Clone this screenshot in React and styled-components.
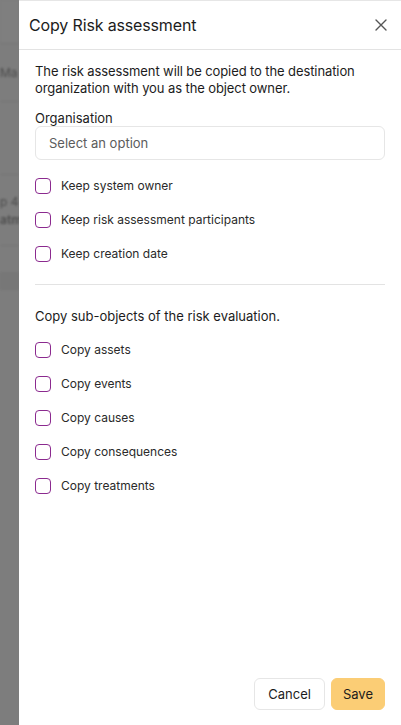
import React from "react";
import styled, { createGlobalStyle } from "styled-components";

const Global = createGlobalStyle`
  html, body { margin: 0; padding: 0; height: 100%; }
  body { font-family: "Inter", "Liberation Sans", sans-serif; color: #1f1f1f; background: #7f7f7f; }
  #root { height: 100%; }
  * { box-sizing: border-box; }
`;

const Screen = styled.div`
  display: flex;
  width: 401px;
  height: 725px;
  overflow: hidden;
`;

const Backdrop = styled.div`
  width: 19px;
  flex: none;
  display: flex;
  flex-direction: column;
  background: #7d7d7d;
  overflow: hidden;
`;

const BackRow = styled.div`
  height: ${(p) => p.h}px;
  flex: none;
  border-bottom: 1px solid ${(p) => (p.line ? "#767676" : "transparent")};
  background: ${(p) => p.bg || "transparent"};
  display: flex;
  align-items: center;
  font-size: 12px;
  font-weight: ${(p) => (p.bold ? 600 : 400)};
  color: #4c4c4c;
  white-space: nowrap;
  filter: blur(0.8px);
`;

const Drawer = styled.div`
  flex: 1;
  background: #ffffff;
  display: flex;
  flex-direction: column;
  border-top: 1px solid #e6e6e6;
`;

const Header = styled.div`
  height: 49px;
  flex: none;
  display: flex;
  align-items: center;
  justify-content: space-between;
  padding: 0 12px 0 10px;
  border-bottom: 1px solid #e3e3e3;
`;

const Title = styled.h2`
  margin: 0;
  font-size: 16px;
  font-weight: 400;
  color: #1c1c1c;
  letter-spacing: -0.15px;
`;

const CloseButton = styled.button`
  border: 0;
  background: none;
  padding: 0;
  width: 16px;
  height: 16px;
  display: flex;
  align-items: center;
  justify-content: center;
  cursor: pointer;
`;

const Body = styled.div`
  flex: 1;
  display: flex;
  flex-direction: column;
  padding: 13px 16px 0 16px;
`;

const Intro = styled.p`
  margin: 0;
  font-size: 13px;
  line-height: 17px;
  color: #1c1c1c;
  letter-spacing: -0.1px;
`;

const FieldLabel = styled.div`
  margin-top: 13px;
  font-size: 13px;
  line-height: 16px;
  color: #1c1c1c;
`;

const Select = styled.div`
  margin-top: 0;
  height: 34px;
  border: 1px solid #e6e6e6;
  border-radius: 6px;
  display: flex;
  align-items: center;
  padding-left: 13px;
  font-size: 13px;
  color: #5c5c5c;
`;

const CheckList = styled.div`
  display: flex;
  flex-direction: column;
  gap: 18px;
  margin-top: ${(p) => p.top}px;
`;

const CheckRow = styled.label`
  display: flex;
  align-items: center;
  gap: 10px;
  font-size: 12px;
  line-height: 16px;
  color: #2a2a2a;
  cursor: pointer;
`;

const Box = styled.span`
  width: 16px;
  height: 16px;
  flex: none;
  border: 1.5px solid #8b2a8f;
  border-radius: 4px;
  background: #fff;
`;

const Divider = styled.hr`
  margin: 22px 0 0 0;
  border: 0;
  border-top: 1px solid #e3e3e3;
`;

const SectionTitle = styled.div`
  margin-top: 23px;
  font-size: 13px;
  line-height: 17px;
  color: #1c1c1c;
`;

const Footer = styled.div`
  display: flex;
  justify-content: flex-end;
  gap: 6px;
  padding: 0 16px 15px 16px;
`;

const Button = styled.button`
  height: 32px;
  padding: 0 ${(p) => (p.primary ? 11 : 13)}px;
  border-radius: 6px;
  font-family: inherit;
  font-size: 13px;
  color: #1c1c1c;
  border: 1px solid ${(p) => (p.primary ? "#fbcd75" : "#e6e6e6")};
  background: ${(p) => (p.primary ? "#fbcd75" : "#ffffff")};
  cursor: pointer;
`;

const keepOptions = ["Keep system owner", "Keep risk assessment participants", "Keep creation date"];
const copyOptions = ["Copy assets", "Copy events", "Copy causes", "Copy consequences", "Copy treatments"];

export default function App() {
  return (
    <>
      <Global />
      <Screen>
        <Backdrop>
          <BackRow h={44} line bg="#7f7f7f" />
          <BackRow h={58} line>Ma</BackRow>
          <BackRow h={73} line />
          <BackRow h={17} />
          <BackRow h={20}>p 4</BackRow>
          <BackRow h={16} bold>atm</BackRow>
          <BackRow h={18} line />
          <BackRow h={26} />
          <BackRow h={18} bg="#777" />
          <BackRow h={435} />
        </Backdrop>
        <Drawer>
          <Header>
            <Title>Copy Risk assessment</Title>
            <CloseButton aria-label="Close">
              <svg width="12" height="12" viewBox="0 0 12 12">
                <path d="M1 1 L11 11 M11 1 L1 11" stroke="#555" strokeWidth="1.4" strokeLinecap="round" />
              </svg>
            </CloseButton>
          </Header>
          <Body>
            <Intro>
              The risk assessment will be copied to the destination organization with you as the object owner.
            </Intro>
            <FieldLabel>Organisation</FieldLabel>
            <Select>Select an option</Select>
            <CheckList top={18}>
              {keepOptions.map((o) => (
                <CheckRow key={o}>
                  <Box />
                  {o}
                </CheckRow>
              ))}
            </CheckList>
            <Divider />
            <SectionTitle>Copy sub-objects of the risk evaluation.</SectionTitle>
            <CheckList top={17}>
              {copyOptions.map((o) => (
                <CheckRow key={o}>
                  <Box />
                  {o}
                </CheckRow>
              ))}
            </CheckList>
          </Body>
          <Footer>
            <Button>Cancel</Button>
            <Button primary>Save</Button>
          </Footer>
        </Drawer>
      </Screen>
    </>
  );
}
